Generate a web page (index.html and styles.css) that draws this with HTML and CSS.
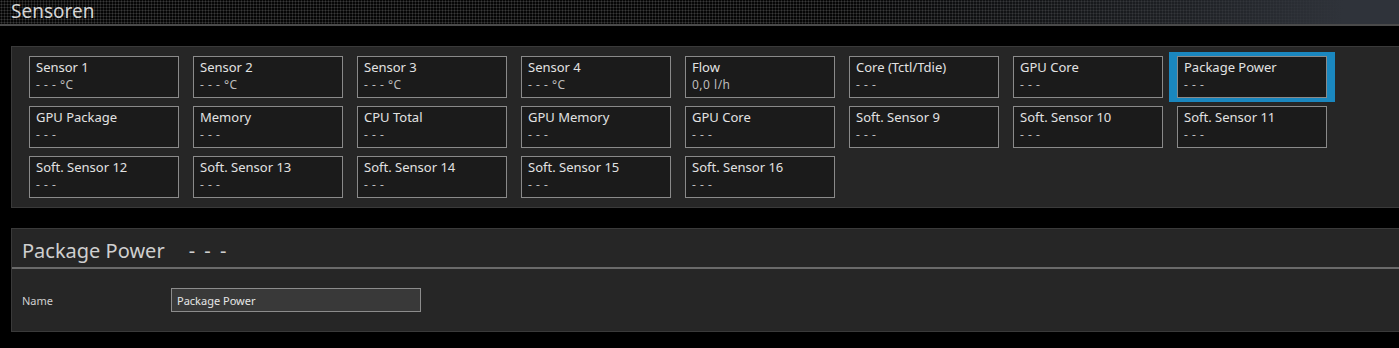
FILE: index.html
```html
<!DOCTYPE html>
<html lang="de">
<head>
  <meta charset="UTF-8" />
  <title>Sensoren</title>
  <link rel="stylesheet" href="styles.css">
</head>
<body>
  <div class="titlebar">Sensoren</div>

  <div class="panel sensors">
    <div class="tile"><div class="name">Sensor 1</div><div class="value">- - - °C</div></div>
    <div class="tile"><div class="name">Sensor 2</div><div class="value">- - - °C</div></div>
    <div class="tile"><div class="name">Sensor 3</div><div class="value">- - - °C</div></div>
    <div class="tile"><div class="name">Sensor 4</div><div class="value">- - - °C</div></div>
    <div class="tile"><div class="name">Flow</div><div class="value">0,0 l/h</div></div>
    <div class="tile"><div class="name">Core (Tctl/Tdie)</div><div class="value">- - -</div></div>
    <div class="tile"><div class="name">GPU Core</div><div class="value">- - -</div></div>
    <div class="tile selected"><div class="name">Package Power</div><div class="value">- - -</div></div>
    <div class="tile"><div class="name">GPU Package</div><div class="value">- - -</div></div>
    <div class="tile"><div class="name">Memory</div><div class="value">- - -</div></div>
    <div class="tile"><div class="name">CPU Total</div><div class="value">- - -</div></div>
    <div class="tile"><div class="name">GPU Memory</div><div class="value">- - -</div></div>
    <div class="tile"><div class="name">GPU Core</div><div class="value">- - -</div></div>
    <div class="tile"><div class="name">Soft. Sensor 9</div><div class="value">- - -</div></div>
    <div class="tile"><div class="name">Soft. Sensor 10</div><div class="value">- - -</div></div>
    <div class="tile"><div class="name">Soft. Sensor 11</div><div class="value">- - -</div></div>
    <div class="tile"><div class="name">Soft. Sensor 12</div><div class="value">- - -</div></div>
    <div class="tile"><div class="name">Soft. Sensor 13</div><div class="value">- - -</div></div>
    <div class="tile"><div class="name">Soft. Sensor 14</div><div class="value">- - -</div></div>
    <div class="tile"><div class="name">Soft. Sensor 15</div><div class="value">- - -</div></div>
    <div class="tile"><div class="name">Soft. Sensor 16</div><div class="value">- - -</div></div>
  </div>

  <div class="panel details">
    <div class="details-head">
      <span class="details-title">Package Power</span>
      <span class="details-value">- - -</span>
    </div>
    <div class="details-body">
      <label class="field-label" for="name">Name</label>
      <input type="text" id="name" class="field-input" value="Package Power">
    </div>
  </div>
</body>
</html>
```

FILE: styles.css
```css
* { box-sizing: border-box; }
html, body {
  margin: 0;
  padding: 0;
  background: #000;
  color: #ddd;
  font-family: "Noto Sans", "Open Sans", sans-serif;
}
.titlebar {
  height: 26px;
  padding: 0 11px;
  font-size: 19px;
  line-height: 23px;
  color: #d4d4d4;
  border-bottom: 2px solid #4a4a4a;
  background:
    linear-gradient(to right, rgba(47, 51, 58, 0) 60%, rgba(47, 51, 58, 0.6) 85%, #2f333a 96%),
    radial-gradient(circle, #3a3a3a 0.9px, transparent 1.1px) 0 0 / 3px 3px,
    #050505;
}
.panel {
  margin-left: 11px;
  background: #262626;
  border: 1px solid #3a3a3a;
  border-right: none;
}
.sensors {
  margin-top: 20px;
  padding: 9px 17px 9px 17px;
  display: grid;
  grid-template-columns: repeat(8, 150px);
  column-gap: 14px;
  row-gap: 8px;
}
.tile {
  height: 42px;
  background: #1b1b1b;
  border: 1px solid #8a8a8a;
  padding: 2px 6px 0;
}
.tile.selected {
  box-shadow: 0 0 0 4px #1a87bf, -4px 0 0 4px #1a87bf, 4px 0 0 4px #1a87bf;
}
.tile .name {
  font-size: 13px;
  line-height: 17px;
  color: #e2e2e2;
  white-space: nowrap;
}
.tile .value {
  margin-top: 1px;
  font-size: 12px;
  line-height: 16px;
  letter-spacing: 0.5px;
  color: #bdbdbd;
}
.details {
  margin-top: 20px;
}
.details-head {
  height: 40px;
  padding: 4px 10px 0;
  border-bottom: 2px solid #6a6a6a;
  display: flex;
  align-items: center;
  gap: 24px;
}
.details-title {
  font-size: 20px;
  color: #cfcfcf;
}
.details-value {
  font-size: 20px;
  letter-spacing: 2px;
  color: #cfcfcf;
}
.details-body {
  padding: 19px 10px 19px;
  display: flex;
  align-items: center;
}
.field-label {
  width: 149px;
  font-size: 11px;
  color: #cfcfcf;
}
.field-input {
  width: 250px;
  height: 24px;
  padding: 0 5px;
  background: #393939;
  border: 1px solid #8c8c8c;
  color: #e6e6e6;
  font-family: inherit;
  font-size: 11px;
  outline: none;
}
```
